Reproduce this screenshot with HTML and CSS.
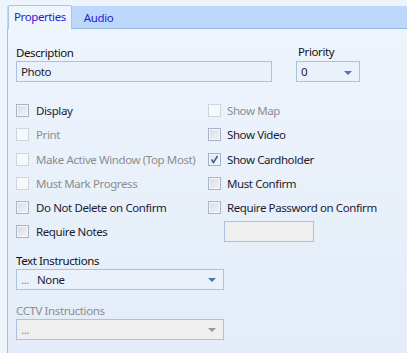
FILE: index.html
```html
<!DOCTYPE html>
<html lang="en">
<head>
  <meta charset="UTF-8">
  <title>Properties</title>
  <link rel="stylesheet" href="styles.css">
</head>
<body>
<div class="tabbar">
  <div class="tab active">Properties</div>
  <div class="tab">Audio</div>
</div>
<div class="panel">
  <div class="top-row">
    <div class="field desc">
      <label>Description</label>
      <div class="input">Photo</div>
    </div>
    <div class="field prio">
      <label>Priority</label>
      <div class="input combo">0<span class="arrow"></span></div>
    </div>
  </div>

  <div class="checks">
    <div class="chk"><span class="box"></span>Display</div>
    <div class="chk off"><span class="box"></span>Show Map</div>
    <div class="chk off"><span class="box"></span>Print</div>
    <div class="chk"><span class="box"></span>Show Video</div>
    <div class="chk off"><span class="box"></span>Make Active Window (Top Most)</div>
    <div class="chk"><span class="box checked"><svg width="9" height="9" viewBox="0 0 9 9"><path d="M1.5 4.5 L3.5 7.5 L7.5 1" fill="none" stroke="#3d5f96" stroke-width="1.5"/></svg></span>Show Cardholder</div>
    <div class="chk off"><span class="box"></span>Must Mark Progress</div>
    <div class="chk"><span class="box"></span>Must Confirm</div>
    <div class="chk"><span class="box"></span>Do Not Delete on Confirm</div>
    <div class="chk"><span class="box"></span>Require Password on Confirm</div>
    <div class="chk"><span class="box"></span>Require Notes</div>
    <div class="pwd"><div class="input disabled"></div></div>
  </div>

  <div class="field wide">
    <label>Text Instructions</label>
    <div class="input combo"><span class="dots">...</span>None<span class="arrow"></span></div>
  </div>
  <div class="field wide off">
    <label>CCTV Instructions</label>
    <div class="input combo disabled"><span class="dots">...</span><span class="arrow"></span></div>
  </div>
</div>
</body>
</html>
```

FILE: styles.css
```css
body, html {
  margin: 0;
  padding: 0;
  height: 100%;
  font-family: 'Noto Sans', sans-serif;
  font-size: 11.5px;
  letter-spacing: -0.4px;
  color: #1b1b33;
  background: #eef4fc;
  overflow: hidden;
}
.tabbar {
  margin: 6px 0 0 7px;
  height: 22px;
  background: #bcd9fb;
  border-bottom: 1px solid #95b7e2;
  display: flex;
  align-items: flex-end;
  padding-left: 1px;
}
.tab {
  height: 22px;
  line-height: 21px;
  padding: 0 10px 0 12px;
  color: #2a1ad8;
  margin-bottom: -1px;
}
.tab.active {
  background: #eef5fd;
  border: 1px solid #a9c5e8;
  border-bottom: none;
  border-radius: 2px 2px 0 0;
  padding: 0 5px;
  height: 23px;
}
.panel {
  margin-left: 7px;
  border-left: 1px solid #a3c1e8;
  height: calc(100% - 29px);
  background: linear-gradient(#eef4fc, #e3ecf8);
  padding: 16px 0 0 8px;
  box-sizing: border-box;
}
.top-row {
  display: flex;
  gap: 24px;
}
.field label {
  display: block;
  height: 16px;
  line-height: 16px;
  color: #111;
}
.desc .input { width: 250px; }
.prio { margin-top: -4px; }
.prio label { margin: 0 0 0 2px; height: 20px; line-height: 22px; }
.prio .input { width: 58px; }
.input {
  height: 19px;
  line-height: 19px;
  border: 1px solid #aac2e2;
  background: #eaf1fb;
  padding-left: 4px;
  box-sizing: content-box;
  position: relative;
}
.input.disabled {
  background: #efefef;
}
.combo .arrow {
  position: absolute;
  right: 7px;
  top: 9px;
  border-left: 4px solid transparent;
  border-right: 4px solid transparent;
  border-top: 4px solid #4f74a8;
}
.combo.disabled .arrow {
  border-top-color: #9e9a8e;
}
.dots {
  color: #8a8a8a;
  display: inline-block;
  width: 16px;
}
.checks {
  display: grid;
  grid-template-columns: 192px 1fr;
  grid-template-rows: 23px 25px 24px 25px 23px 24px;
  margin-top: 17px;
  align-items: center;
}
.chk {
  display: flex;
  align-items: center;
  height: 16px;
  white-space: nowrap;
}
.chk:nth-child(even) .box { margin-right: 6px; }
.box {
  flex: none;
  width: 11px;
  height: 11px;
  border: 1px solid #a8b4c6;
  background: linear-gradient(135deg, #d7dbe2, #f3f4f6);
  box-shadow: inset 0 0 0 1px #f4f6f9;
  margin-right: 7px;
  display: flex;
  align-items: center;
  justify-content: center;
}
.box.checked {
  border-color: #9fb2d0;
  background: linear-gradient(135deg, #dfe4ec, #f6f7f9);
}
.chk.off { color: #8d8d8d; }
.chk.off .box {
  border-color: #cfd5de;
  background: #f7f8fa;
  box-shadow: none;
}
.pwd { padding-left: 16px; }
.pwd .input { width: 84px; }
.wide { width: 208px; margin-top: 10px; }
.wide + .wide { margin-top: 13px; }
.wide .input { height: 19px; line-height: 19px; }
.wide .combo .arrow { top: 8px; }
.field.off label { color: #8d8d8d; }
```
